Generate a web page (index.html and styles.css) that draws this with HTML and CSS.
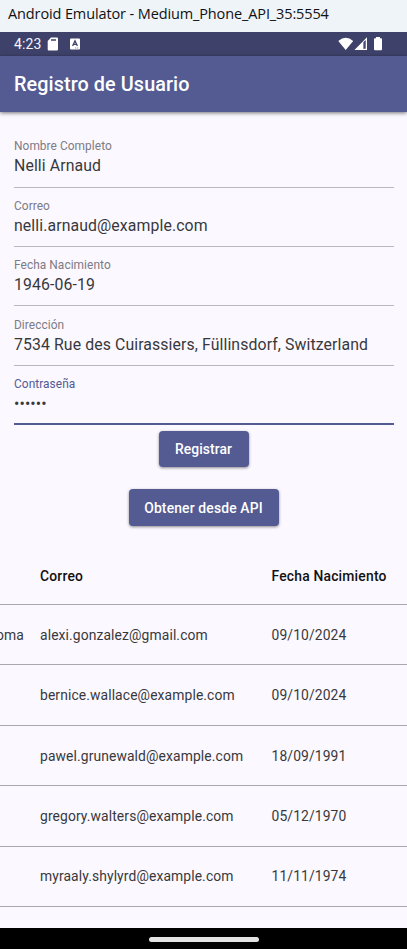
FILE: index.html
```html
<!DOCTYPE html>
<html lang="es">
<head>
<meta charset="utf-8">
<title>Registro de Usuario</title>
<link rel="stylesheet" href="styles.css">
</head>
<body>
<div class="window-title"><span>Android Emulator - Medium_Phone_API_35:5554</span></div>
<div class="status">
  <span class="clock">4:23</span>
  <svg class="sd" width="12" height="14" viewBox="0 0 12 14"><path fill="#fff" fill-rule="evenodd" d="M4 .5h6q1 0 1 1v11q0 1-1 1H1.700q-1 0-1-1V4zM4 2.300v1.400h5V2.300z"/></svg>
  <svg class="kb" width="10" height="12" viewBox="0 0 10 12"><rect y=".5" width="10" height="11" rx="1" fill="#fff"/><path d="M2.600 8 5 2.800 7.400 8M3.500 6.300h3" fill="none" stroke="#3e426b" stroke-width="1.300"/><path d="M5.200 10h1M7.300 10h1" stroke="#3e426b" stroke-width=".7"/></svg>
  <svg class="signals" width="46" height="14" viewBox="0 0 46 14"><path fill="#fff" d="M.3 4Q7.700-2.300 15.200 4L7.700 13zM29 .3V13H16.400z"/><path fill="#3e426b" d="M25.300 5.200 27.700 3v8.800h-2.400z"/><path fill="#9395b2" d="M25.300 5.200h.8v6.600h-.8z"/><path fill="#fff" d="M38 0h4v1.200h1q1 0 1 1v10q0 1-1 1h-6q-1 0-1-1v-10q0-1 1-1h1z"/></svg>
</div>
<header class="appbar"><h1>Registro de Usuario</h1></header>
<main>
  <form class="form">
    <div class="field"><label>Nombre Completo</label><span class="value">Nelli Arnaud</span></div>
    <div class="field"><label>Correo</label><span class="value">nelli.arnaud@example.com</span></div>
    <div class="field"><label>Fecha Nacimiento</label><span class="value">1946-06-19</span></div>
    <div class="field"><label>Dirección</label><span class="value">7534 Rue des Cuirassiers, Füllinsdorf, Switzerland</span></div>
    <div class="field focused"><label>Contraseña</label><span class="value">••••••</span></div>
  </form>
  <div class="actions">
    <button class="btn register" type="button">Registrar</button>
    <button class="btn fetch" type="button">Obtener desde API</button>
  </div>
  <div class="table">
    <div class="row head"><span class="name"></span><span>Correo</span><span>Fecha Nacimiento</span></div>
    <div class="row"><span class="name">oma</span><span>alexi.gonzalez@gmail.com</span><span>09/10/2024</span></div>
    <div class="row"><span class="name"></span><span>bernice.wallace@example.com</span><span>09/10/2024</span></div>
    <div class="row"><span class="name"></span><span>pawel.grunewald@example.com</span><span>18/09/1991</span></div>
    <div class="row"><span class="name"></span><span>gregory.walters@example.com</span><span>05/12/1970</span></div>
    <div class="row"><span class="name"></span><span>myraaly.shylyrd@example.com</span><span>11/11/1974</span></div>
  </div>
</main>
<nav class="navbar"><div class="handle"></div></nav>
</body>
</html>
```
FILE: styles.css
```css
* { box-sizing: border-box; }
body {
  margin: 0;
  height: 949px;
  display: flex;
  flex-direction: column;
  overflow: hidden;
  background: #fbf8ff;
  color: #38383c;
  font-family: Roboto, sans-serif;
}
.window-title {
  flex: none;
  height: 32px;
  padding-left: 8px;
  background: #eff4f9;
  color: #111;
  font: 14.500px/28px "Open Sans", "Noto Sans", sans-serif;
  white-space: nowrap;
}
.window-title span { letter-spacing: -0.12px; }
.status {
  flex: none;
  height: 24px;
  padding: 0 23px 0 14px;
  display: flex;
  align-items: center;
  background: #3e426b;
  color: #f4f4fa;
}
.clock { width: 33px; font-size: 14px; letter-spacing: 0.1px; }
.kb { margin-left: 11px; }
.signals { margin-left: auto; }
.appbar {
  flex: none;
  height: 56px;
  padding-left: 14px;
  background: #545b92;
  color: #fff;
  box-shadow: 0 1px 4px rgba(0, 0, 0, .55);
  z-index: 1;
}
h1 { margin: 0; font-size: 19.800px; font-weight: 500; line-height: 58px; letter-spacing: 0.1px; }
main { flex: 1; min-height: 0; overflow: hidden; }
.form { padding: 16.200px 13px 0 14px; }
.field {
  height: 59.350px;
  padding-top: 10.300px;
  display: flex;
  flex-direction: column;
  border-bottom: 1px solid #b9b7bf;
}
.field label { font-size: 11.900px; line-height: 16px; letter-spacing: 0.06px; color: #7d7b83; }
.value { font-size: 15.840px; line-height: 23px; letter-spacing: 0.1px; white-space: nowrap; }
.field.focused { border-bottom: 2px solid #545b92; }
.field.focused label { color: #545b92; }
.actions {
  padding-top: 6px;
  display: flex;
  flex-direction: column;
  align-items: center;
  gap: 22px;
}
.btn {
  height: 36.500px;
  padding: 0;
  border: 0;
  border-radius: 4px;
  background: #545b92;
  color: #fff;
  font: 500 13.860px Roboto, sans-serif;
  letter-spacing: 0.1px;
  box-shadow: 0 1px 3px rgba(0, 0, 0, .45);
}
.register { width: 90px; }
.fetch { width: 150px; letter-spacing: 0.16px; }
.table { margin-top: 23px; }
.row {
  height: 60.450px;
  display: grid;
  grid-template-columns: 24px 215.500px 1fr;
  column-gap: 16px;
  align-items: center;
  border-bottom: 1px solid #aaa8af;
  font-size: 13.860px;
  letter-spacing: 0.11px;
  white-space: nowrap;
}
.head { height: 56px; color: #111; font-weight: 500; letter-spacing: 0.2px; }
.name { display: flex; justify-content: flex-end; }
.navbar {
  flex: none;
  height: 21px;
  display: flex;
  justify-content: center;
  padding-top: 9px;
  background: #000;
}
.handle { width: 110px; height: 5px; border-radius: 3px; background: #e3e3e3; }
```
